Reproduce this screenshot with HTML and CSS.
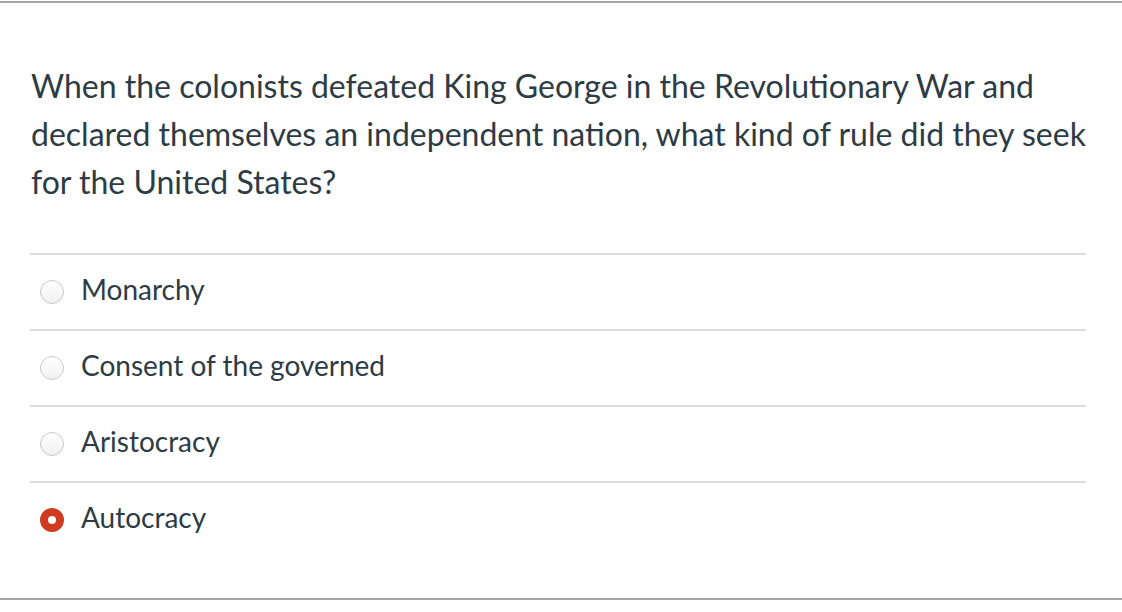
FILE: index.html
```html
<!DOCTYPE html>
<html lang="en">
<head>
  <meta charset="UTF-8" />
  <meta name="viewport" content="width=device-width, initial-scale=1.0" />
  <title>Quiz Question</title>
  <link rel="stylesheet" href="styles.css">
</head>
<body>
  <div class="question">
    <p class="question-text">When the colonists defeated King George in the Revolutionary War and declared themselves an independent nation, what kind of rule did they seek for the United States?</p>
    <div class="answers">
      <label class="answer">
        <span class="radio"></span>
        <span class="answer-text">Monarchy</span>
      </label>
      <label class="answer">
        <span class="radio"></span>
        <span class="answer-text">Consent of the governed</span>
      </label>
      <label class="answer">
        <span class="radio"></span>
        <span class="answer-text">Aristocracy</span>
      </label>
      <label class="answer">
        <span class="radio checked"></span>
        <span class="answer-text">Autocracy</span>
      </label>
    </div>
  </div>
</body>
</html>
```

FILE: styles.css
```css
* {
  box-sizing: border-box;
}
body {
  margin: 0;
  background: #fff;
  font-family: Lato, 'Open Sans', sans-serif;
  color: #2d3b45;
}
.question {
  margin-top: 1px;
  height: 599px;
  border-top: 2px solid #a5a5a5;
  border-bottom: 2px solid #a5a5a5;
  padding: 59px 36px 0 30px;
}
.question-text {
  margin: 0 0 0 1px;
  font-size: 32px;
  line-height: 48px;
}
.answers {
  margin-top: 47px;
}
.answer {
  display: flex;
  align-items: center;
  gap: 17px;
  height: 76px;
  padding-left: 10px;
  border-top: 2px solid #dcdcdc;
}
.radio {
  width: 24px;
  height: 24px;
  border-radius: 50%;
  border: 1px solid #c9c9c9;
  background: linear-gradient(#fff, #f0f0f0);
  flex-shrink: 0;
}
.radio.checked {
  border: 8px solid #d03a22;
  background: #fff;
}
.answer-text {
  font-size: 28px;
  margin-top: -7px;
}
```
